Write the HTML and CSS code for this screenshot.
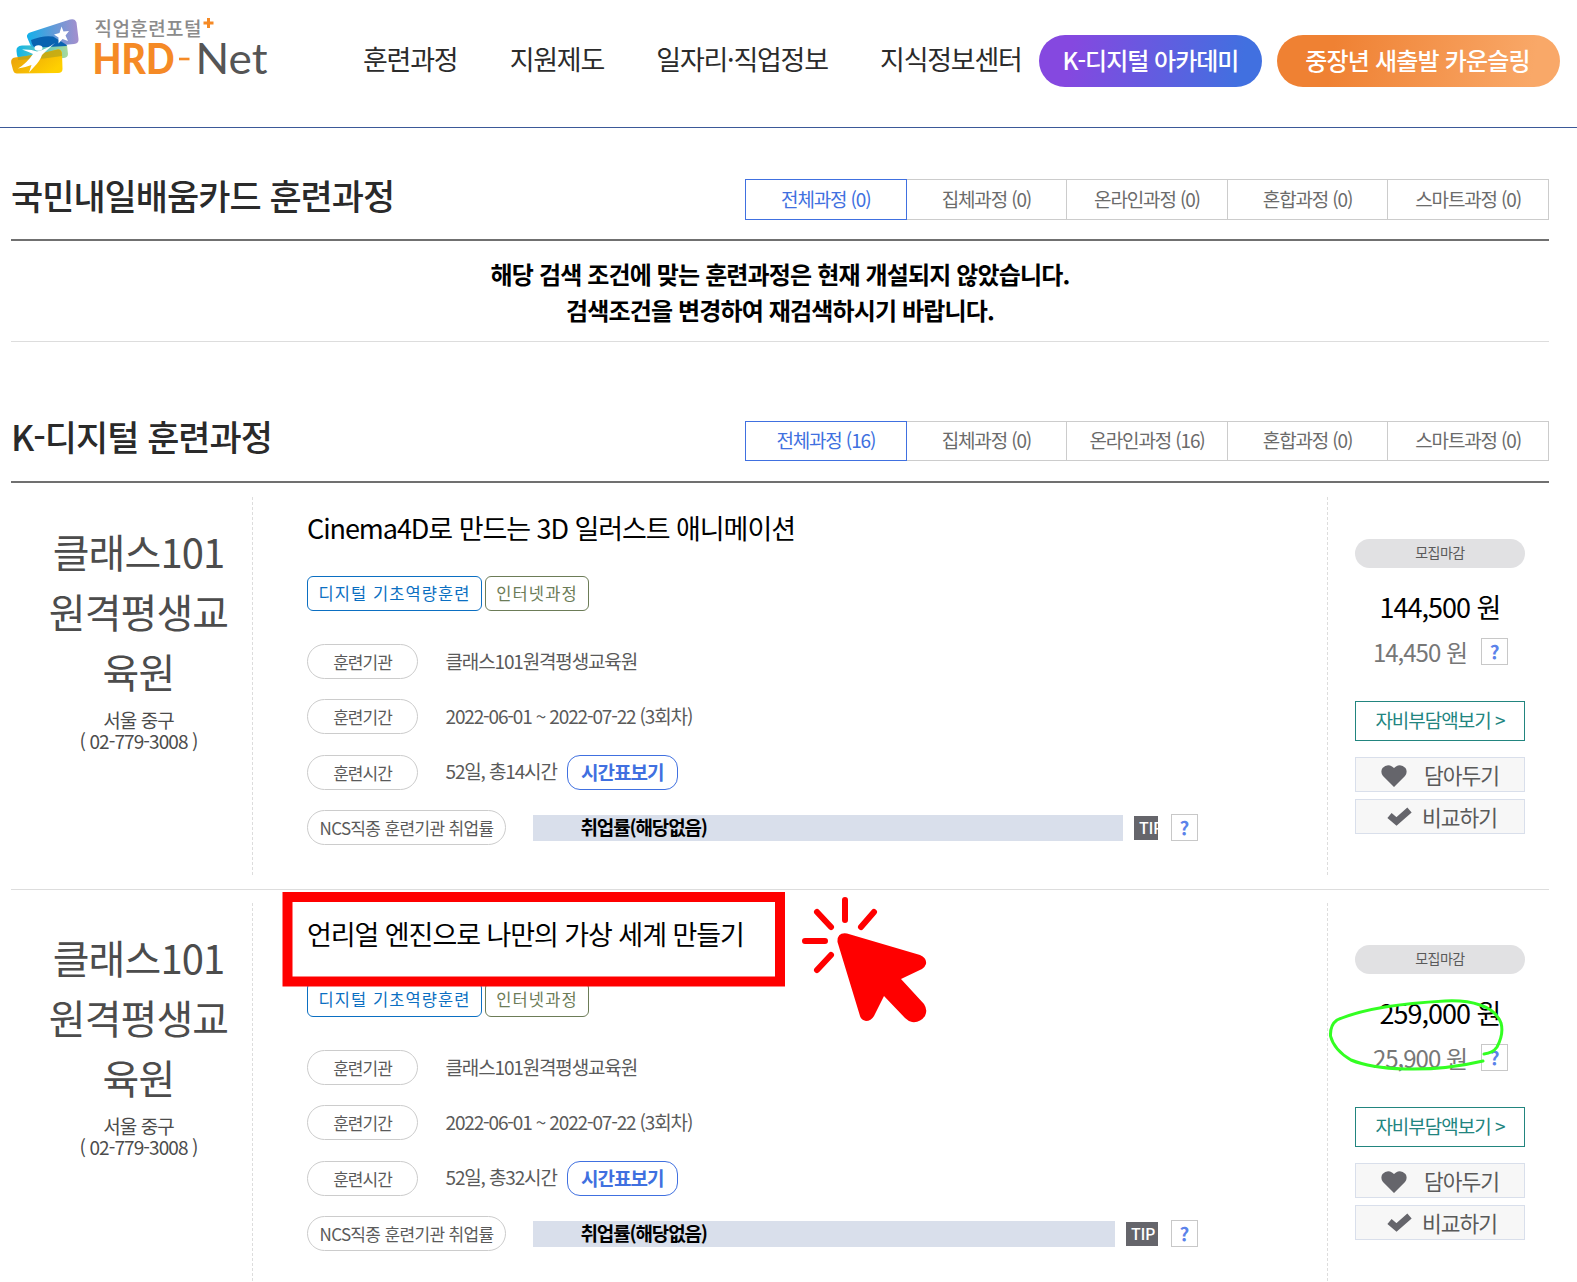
FILE: index.html
```html
<!DOCTYPE html>
<html lang="ko">

<head>
    <meta charset="UTF-8">
    <meta name="viewport" content="width=device-width, initial-scale=1.0">
    <link rel="stylesheet" href="styles.css">

    <title>HRD-Net 직업훈련포털</title>
</head>

<body>
    <header class="header">
        <a class="logo">
            <svg width="290" height="80" viewBox="0 0 290 80">
                <defs>
                    <linearGradient id="sky" x1="0" x2="1">
                        <stop offset="0" stop-color="#12b0ea" />
                        <stop offset="0.5" stop-color="#5f9bd9" />
                        <stop offset="1" stop-color="#a58fcd" />
                    </linearGradient>
                    <linearGradient id="teal" x1="0" x2="1">
                        <stop offset="0" stop-color="#12b4e6" />
                        <stop offset="1" stop-color="#a9d99a" />
                    </linearGradient>
                    <linearGradient id="sun" x1="0" x2="1" y2="0.6">
                        <stop offset="0" stop-color="#e79a0c" />
                        <stop offset="1" stop-color="#ffd000" />
                    </linearGradient>
                </defs>
                <path d="M22 45.500Q16 46 16.500 51Q17 60 21 60L64 58Q68 57.500 68 54L67 45Z" fill="url(#teal)" />
                <path d="M30 32.500L70 19.500Q75 18 76.500 22.500L78.500 39Q79 43.500 74 44L37 47.500Q31 48 29.500 43L27 37Q26.500 34 30 32.500Z" fill="url(#sky)" />
                <path d="M31 40Q43 35 53 36.500L66 44.500L67 46L37 47.500Q32 47.500 31 40Z" fill="#0862b0" />
                <path d="M15 57.500Q38 55 57 49.500Q61 48.500 62 53L62.500 69Q62.500 73 58 73L17 73.500Q14 73.500 13 70L11.200 63Q10.500 58 15 57.500Z" fill="url(#sun)" />
                <path d="M18 57.500L38 54L58 49.500Q62 49 62 56L44 58.500L18 60Z" fill="#a8a020" opacity="0.6" />
                <path d="M61.500 26.500L63.500 31.500L69 31L65.500 35.500L68 41L62.500 39L58.500 43.500L58.500 37.500L54 34.500L59.500 33Z" fill="#fff" />
                <path d="M55 43Q47 50 42 55Q40 61 34 67L29 72.500L31.500 65Q26 67 18 68.500Q27 63 33 54Q29 52 22 49.500Q31 49 37 51.500Q46 49.500 55 43Z" fill="#fff" />
                <ellipse cx="38.500" cy="48" rx="4" ry="2.800" fill="#fff" />
                <text class="logo-sub" x="94.500" y="36" textLength="107">직업훈련포털</text>
                <path d="M208.500 18v10M203.500 23h10" stroke="#f58a26" stroke-width="3" />
                <text class="logo-hrd" x="92.500" y="73.500" textLength="82" lengthAdjust="spacingAndGlyphs">HRD</text>
                <path d="M179 59h10.500" stroke="#f58a26" stroke-width="2.600" />
                <text class="logo-net" x="195.500" y="73.500" textLength="72" lengthAdjust="spacingAndGlyphs">Net</text>
            </svg>
        </a>
        <nav class="gnb">
            <a>훈련과정</a>
            <a>지원제도</a>
            <a>일자리·직업정보</a>
            <a>지식정보센터</a>
        </nav>
        <a class="quick quick-academy">K-디지털 아카데미</a>
        <a class="quick quick-counsel">중장년 새출발 카운슬링</a>
    </header>

    <main class="content">
        <section>
            <div class="sec-head">
                <h2>국민내일배움카드 훈련과정</h2>
                <ul class="tabs">
                    <li class="on">전체과정 (0)</li>
                    <li>집체과정 (0)</li>
                    <li>온라인과정 (0)</li>
                    <li>혼합과정 (0)</li>
                    <li>스마트과정 (0)</li>
                </ul>
            </div>
            <p class="empty">해당 검색 조건에 맞는 훈련과정은 현재 개설되지 않았습니다.<br>검색조건을 변경하여 재검색하시기 바랍니다.</p>
        </section>

        <section class="sec-digital">
            <div class="sec-head">
                <h2>K-디지털 훈련과정</h2>
                <ul class="tabs">
                    <li class="on">전체과정 (16)</li>
                    <li>집체과정 (0)</li>
                    <li>온라인과정 (16)</li>
                    <li>혼합과정 (0)</li>
                    <li>스마트과정 (0)</li>
                </ul>
            </div>

            <article class="course">
                <div class="school">
                    <strong>클래스101<br>원격평생교<br>육원</strong>
                    <span>서울 중구<br>( 02-779-3008 )</span>
                </div>
                <div class="info">
                    <h3>Cinema4D로 만드는 3D 일러스트 애니메이션</h3>
                    <div class="badges">
                        <span class="badge badge-blue">디지털 기초역량훈련</span>
                        <span class="badge badge-green">인터넷과정</span>
                    </div>
                    <dl>
                        <div class="row"><dt>훈련기관</dt><dd>클래스101원격평생교육원</dd></div>
                        <div class="row"><dt>훈련기간</dt><dd>2022-06-01 ~ 2022-07-22 (3회차)</dd></div>
                        <div class="row"><dt>훈련시간</dt><dd>52일, 총14시간</dd><a class="btn-time">시간표보기</a></div>
                        <div class="row row-rate">
                            <dt>NCS직종 훈련기관 취업률</dt>
                            <dd class="rate">취업률(해당없음)</dd>
                            <span class="tip tip-cut">TIP</span>
                            <span class="help">?</span>
                        </div>
                    </dl>
                </div>
                <div class="side">
                    <span class="state">모집마감</span>
                    <strong class="price">144,500 원</strong>
                    <div class="self"><span>14,450 원</span><span class="help">?</span></div>
                    <a class="btn-self">자비부담액보기 &gt;</a>
                    <a class="btn-side"><svg class="heart" width="26" height="22" viewBox="0 0 26 22"><path d="M13 22L2 11Q-1 7 1.500 3Q6-1.500 11 1.500L13 3L15 1.500Q20-1.500 24.500 3Q27 7 24 11Z" /></svg>담아두기</a>
                    <a class="btn-side"><svg class="check" width="25" height="19" viewBox="0 0 25 19"><path d="M2.500 8.500L9.500 14.500L22.500 3" /></svg>비교하기</a>
                </div>
            </article>

            <article class="course">
                <div class="school">
                    <strong>클래스101<br>원격평생교<br>육원</strong>
                    <span>서울 중구<br>( 02-779-3008 )</span>
                </div>
                <div class="info">
                    <h3>언리얼 엔진으로 나만의 가상 세계 만들기</h3>
                    <div class="badges">
                        <span class="badge badge-blue">디지털 기초역량훈련</span>
                        <span class="badge badge-green">인터넷과정</span>
                    </div>
                    <dl>
                        <div class="row"><dt>훈련기관</dt><dd>클래스101원격평생교육원</dd></div>
                        <div class="row"><dt>훈련기간</dt><dd>2022-06-01 ~ 2022-07-22 (3회차)</dd></div>
                        <div class="row"><dt>훈련시간</dt><dd>52일, 총32시간</dd><a class="btn-time">시간표보기</a></div>
                        <div class="row row-rate">
                            <dt>NCS직종 훈련기관 취업률</dt>
                            <dd class="rate">취업률(해당없음)</dd>
                            <span class="tip">TIP</span>
                            <span class="help">?</span>
                        </div>
                    </dl>
                </div>
                <div class="side">
                    <span class="state">모집마감</span>
                    <strong class="price">259,000 원</strong>
                    <div class="self"><span>25,900 원</span><span class="help">?</span></div>
                    <a class="btn-self">자비부담액보기 &gt;</a>
                    <a class="btn-side"><svg class="heart" width="26" height="22" viewBox="0 0 26 22"><path d="M13 22L2 11Q-1 7 1.500 3Q6-1.500 11 1.500L13 3L15 1.500Q20-1.500 24.500 3Q27 7 24 11Z" /></svg>담아두기</a>
                    <a class="btn-side"><svg class="check" width="25" height="19" viewBox="0 0 25 19"><path d="M2.500 8.500L9.500 14.500L22.500 3" /></svg>비교하기</a>
                </div>
            </article>
        </section>
    </main>

    <!-- marks over the second course -->
    <svg class="marks" width="1577" height="1282" viewBox="0 0 1577 1282">
        <rect x="287.500" y="897" width="492.500" height="84.500" fill="none" stroke="#f00" stroke-width="10" />
        <path d="M845 900V920M817 912L831 927M874 912L861 927M805 941H825M831 955L817 970" fill="none" stroke="#f00" stroke-width="6" stroke-linecap="round" />
        <path d="M847 933.500L920 955Q927 958 926 964Q925 967 922 969L901 979L924 1004Q928 1010 925 1016Q920 1023 912 1022Q908 1021 905 1018L884 996L874 1016Q871 1021 866 1021Q861 1020 860 1016L837.500 942Q837 932 847 933.500Z" fill="#f00" />
        <path d="M1484 1054Q1493 1053 1497 1047Q1504 1034 1501 1023Q1496 1010 1480 1005Q1466 1000 1445 1001Q1410 1003 1385 1007Q1355 1012 1337 1020Q1330 1025 1330.500 1036Q1334 1050 1351 1060Q1370 1068 1405 1069Q1445 1070 1483 1061" fill="none" stroke="#3f2" stroke-width="3" stroke-linecap="round" />
    </svg>
</body>

</html>
```
FILE: styles.css
```css
* {
    box-sizing: border-box;
}

body {
    position: relative;
    width: 1577px;
    height: 1282px;
    margin: 0;
    overflow: hidden;
    background-color: #fff;
    color: #5a5a5a;
    font-family: "Noto Sans CJK KR", sans-serif;
    letter-spacing: -1px;
}

h2,
h3,
p,
ul,
dl,
dd {
    margin: 0;
    padding: 0;
}

.header {
    display: flex;
    align-items: flex-start;
    height: 128px;
    border-bottom: 1px solid #3b5998;
}

.logo {
    width: 363px;
    height: 80px;
}

.logo-sub {
    font-size: 19px;
    font-weight: 500;
    fill: #8b8b8b;
    letter-spacing: 0;
}

.logo-hrd {
    font-family: Lato, sans-serif;
    font-size: 42px;
    font-weight: 900;
    fill: #f58a26;
    letter-spacing: 0;
}

.logo-net {
    font-family: Lato, sans-serif;
    font-size: 42px;
    fill: #555;
    letter-spacing: 0;
}

.gnb {
    display: flex;
    gap: 52.300px;
    width: 676px;
    padding-top: 39px;
    color: #2b2b2b;
    font-size: 27px;
    letter-spacing: -1.250px;
    line-height: 40px;
    white-space: nowrap;
}

.quick {
    height: 52px;
    margin-top: 35px;
    border-radius: 26px;
    color: #fff;
    font-size: 24px;
    font-weight: 500;
    line-height: 50px;
    text-align: center;
}

.quick-academy {
    width: 223px;
    margin-right: 15px;
    background: linear-gradient(100deg, #8548e0 15%, #4170e0 90%);
}

.quick-counsel {
    width: 283px;
    padding-right: 2px;
    background: linear-gradient(100deg, #ef8133 20%, #f9a868 90%);
    letter-spacing: -0.800px;
}

.content {
    width: 1549px;
    padding-left: 11px;
}

.sec-head {
    display: flex;
    justify-content: space-between;
    align-items: flex-start;
    height: 113px;
    padding-top: 51px;
    border-bottom: 2px solid #707070;
}

.sec-head h2 {
    margin-top: -7px;
    color: #2a2a2a;
    font-size: 35px;
    font-weight: 500;
    line-height: 46px;
}

.tabs {
    display: flex;
    width: 804px;
    list-style: none;
}

.tabs li {
    flex: 1;
    height: 41px;
    border: 1px solid #ccc;
    border-left: 0;
    color: #6b6b6b;
    font-size: 19px;
    letter-spacing: -1.150px;
    line-height: 38px;
    text-align: center;
}

.tabs .on {
    border: 1px solid #4070e0;
    color: #4070e0;
}

.empty {
    height: 101px;
    padding-top: 15px;
    border-bottom: 1px solid #ddd;
    color: #000;
    font-size: 24px;
    font-weight: 700;
    letter-spacing: -0.850px;
    line-height: 36px;
    text-align: center;
}

.sec-digital .sec-head {
    height: 141px;
    padding-top: 79px;
}

.sec-digital .sec-head h2 {
    margin-top: -8px;
}

.sec-digital .tabs li {
    height: 40px;
    line-height: 36px;
}

.course {
    display: flex;
    height: 406.500px;
    padding: 14px 0;
    border-bottom: 1px solid #ddd;
}

.course + .course {
    padding-top: 13.500px;
}

.school {
    width: 242px;
    padding: 24px 0 0 14px;
    border-right: 1px dashed #ddd;
    color: #4c4c4c;
    text-align: center;
}

.school strong {
    display: block;
    font-size: 40px;
    font-weight: 400;
    letter-spacing: -0.900px;
    line-height: 60px;
}

.school span {
    display: block;
    margin-top: 8px;
    font-size: 19px;
    letter-spacing: -0.900px;
    line-height: 21px;
}

.info {
    width: 1075px;
    padding-left: 54px;
    border-right: 1px dashed #ddd;
}

.info h3 {
    padding-top: 11px;
    color: #000;
    font-size: 27px;
    font-weight: 400;
    letter-spacing: -1.060px;
    line-height: 40px;
}

.badges {
    display: flex;
    gap: 3px;
    margin-top: 28px;
}

.badge {
    height: 35px;
    border: 1px solid;
    border-radius: 6px;
    font-size: 16.500px;
    letter-spacing: 1.100px;
    line-height: 33px;
    text-align: center;
}

.badge-blue {
    width: 175px;
    color: #0b6fc2;
}

.badge-green {
    width: 104px;
    color: #6c7c57;
}

.info dl {
    display: flex;
    flex-direction: column;
    gap: 20.400px;
    margin-top: 33px;
}

.row {
    display: flex;
    align-items: center;
    height: 35px;
}

.row dt {
    width: 111px;
    height: 35px;
    margin-right: 27.500px;
    border: 1px solid #ccc;
    border-radius: 18px;
    font-size: 17px;
    line-height: 33px;
    text-align: center;
}

.row dd {
    padding-bottom: 3px;
    font-size: 19px;
    letter-spacing: -1.150px;
}

.btn-time {
    width: 111px;
    height: 35px;
    margin-left: 10px;
    border: 1px solid #4070e0;
    border-radius: 13px;
    color: #4070e0;
    font-size: 19px;
    font-weight: 700;
    line-height: 32px;
    text-align: center;
}

.row-rate {
    width: 891px;
}

.row-rate dt {
    width: 199px;
    margin-right: 27px;
    letter-spacing: -0.650px;
}

.row .rate {
    flex: 1;
    height: 26px;
    padding-left: 47.500px;
    background-color: #d9dfeb;
    color: #000;
    font-weight: 700;
    letter-spacing: -1.150px;
    line-height: 24px;
}

.tip {
    width: 32px;
    height: 24px;
    margin: 0 13px 0 11px;
    padding-left: 5px;
    overflow: hidden;
    background-color: #65656b;
    color: #fff;
    font-size: 16px;
    font-weight: 500;
    letter-spacing: -0.300px;
    line-height: 22px;
}

.tip-cut {
    width: 24px;
}

.help {
    width: 27px;
    height: 27px;
    border: 1px solid #c8c8c8;
    color: #5c83ea;
    font-size: 19px;
    font-weight: 700;
    letter-spacing: 0;
    line-height: 24px;
    text-align: center;
}

.side {
    display: flex;
    flex-direction: column;
    width: 170px;
    margin-left: 27px;
    padding-top: 42px;
    text-align: center;
}

.state {
    height: 29px;
    border-radius: 15px;
    background-color: #e1e1e3;
    font-size: 14px;
    letter-spacing: -0.500px;
    line-height: 27px;
}

.price {
    margin-top: 19px;
    color: #000;
    font-size: 27px;
    font-weight: 400;
    line-height: 40px;
}

.self {
    display: flex;
    justify-content: center;
    align-items: center;
    gap: 14px;
    height: 48px;
    padding-left: 1px;
    color: #777;
    font-size: 24px;
}

.btn-self {
    height: 40px;
    margin-top: 26px;
    margin-bottom: 16px;
    border: 1px solid #22857f;
    color: #22857f;
    font-size: 19px;
    line-height: 36px;
}

.btn-side {
    display: flex;
    align-items: center;
    height: 35px;
    margin-bottom: 6.500px;
    border: 1px solid #d9dfeb;
    background-color: #f7f7f7;
    font-size: 21.500px;
    line-height: 33px;
}

.heart {
    margin: 3px 17px 0 25px;
    fill: #65656b;
}

.check {
    margin: 0 10px 0 31px;
    fill: none;
    stroke: #65656b;
    stroke-width: 6.500;
}

.marks {
    position: absolute;
    top: 0;
    left: 0;
    pointer-events: none;
}
```
